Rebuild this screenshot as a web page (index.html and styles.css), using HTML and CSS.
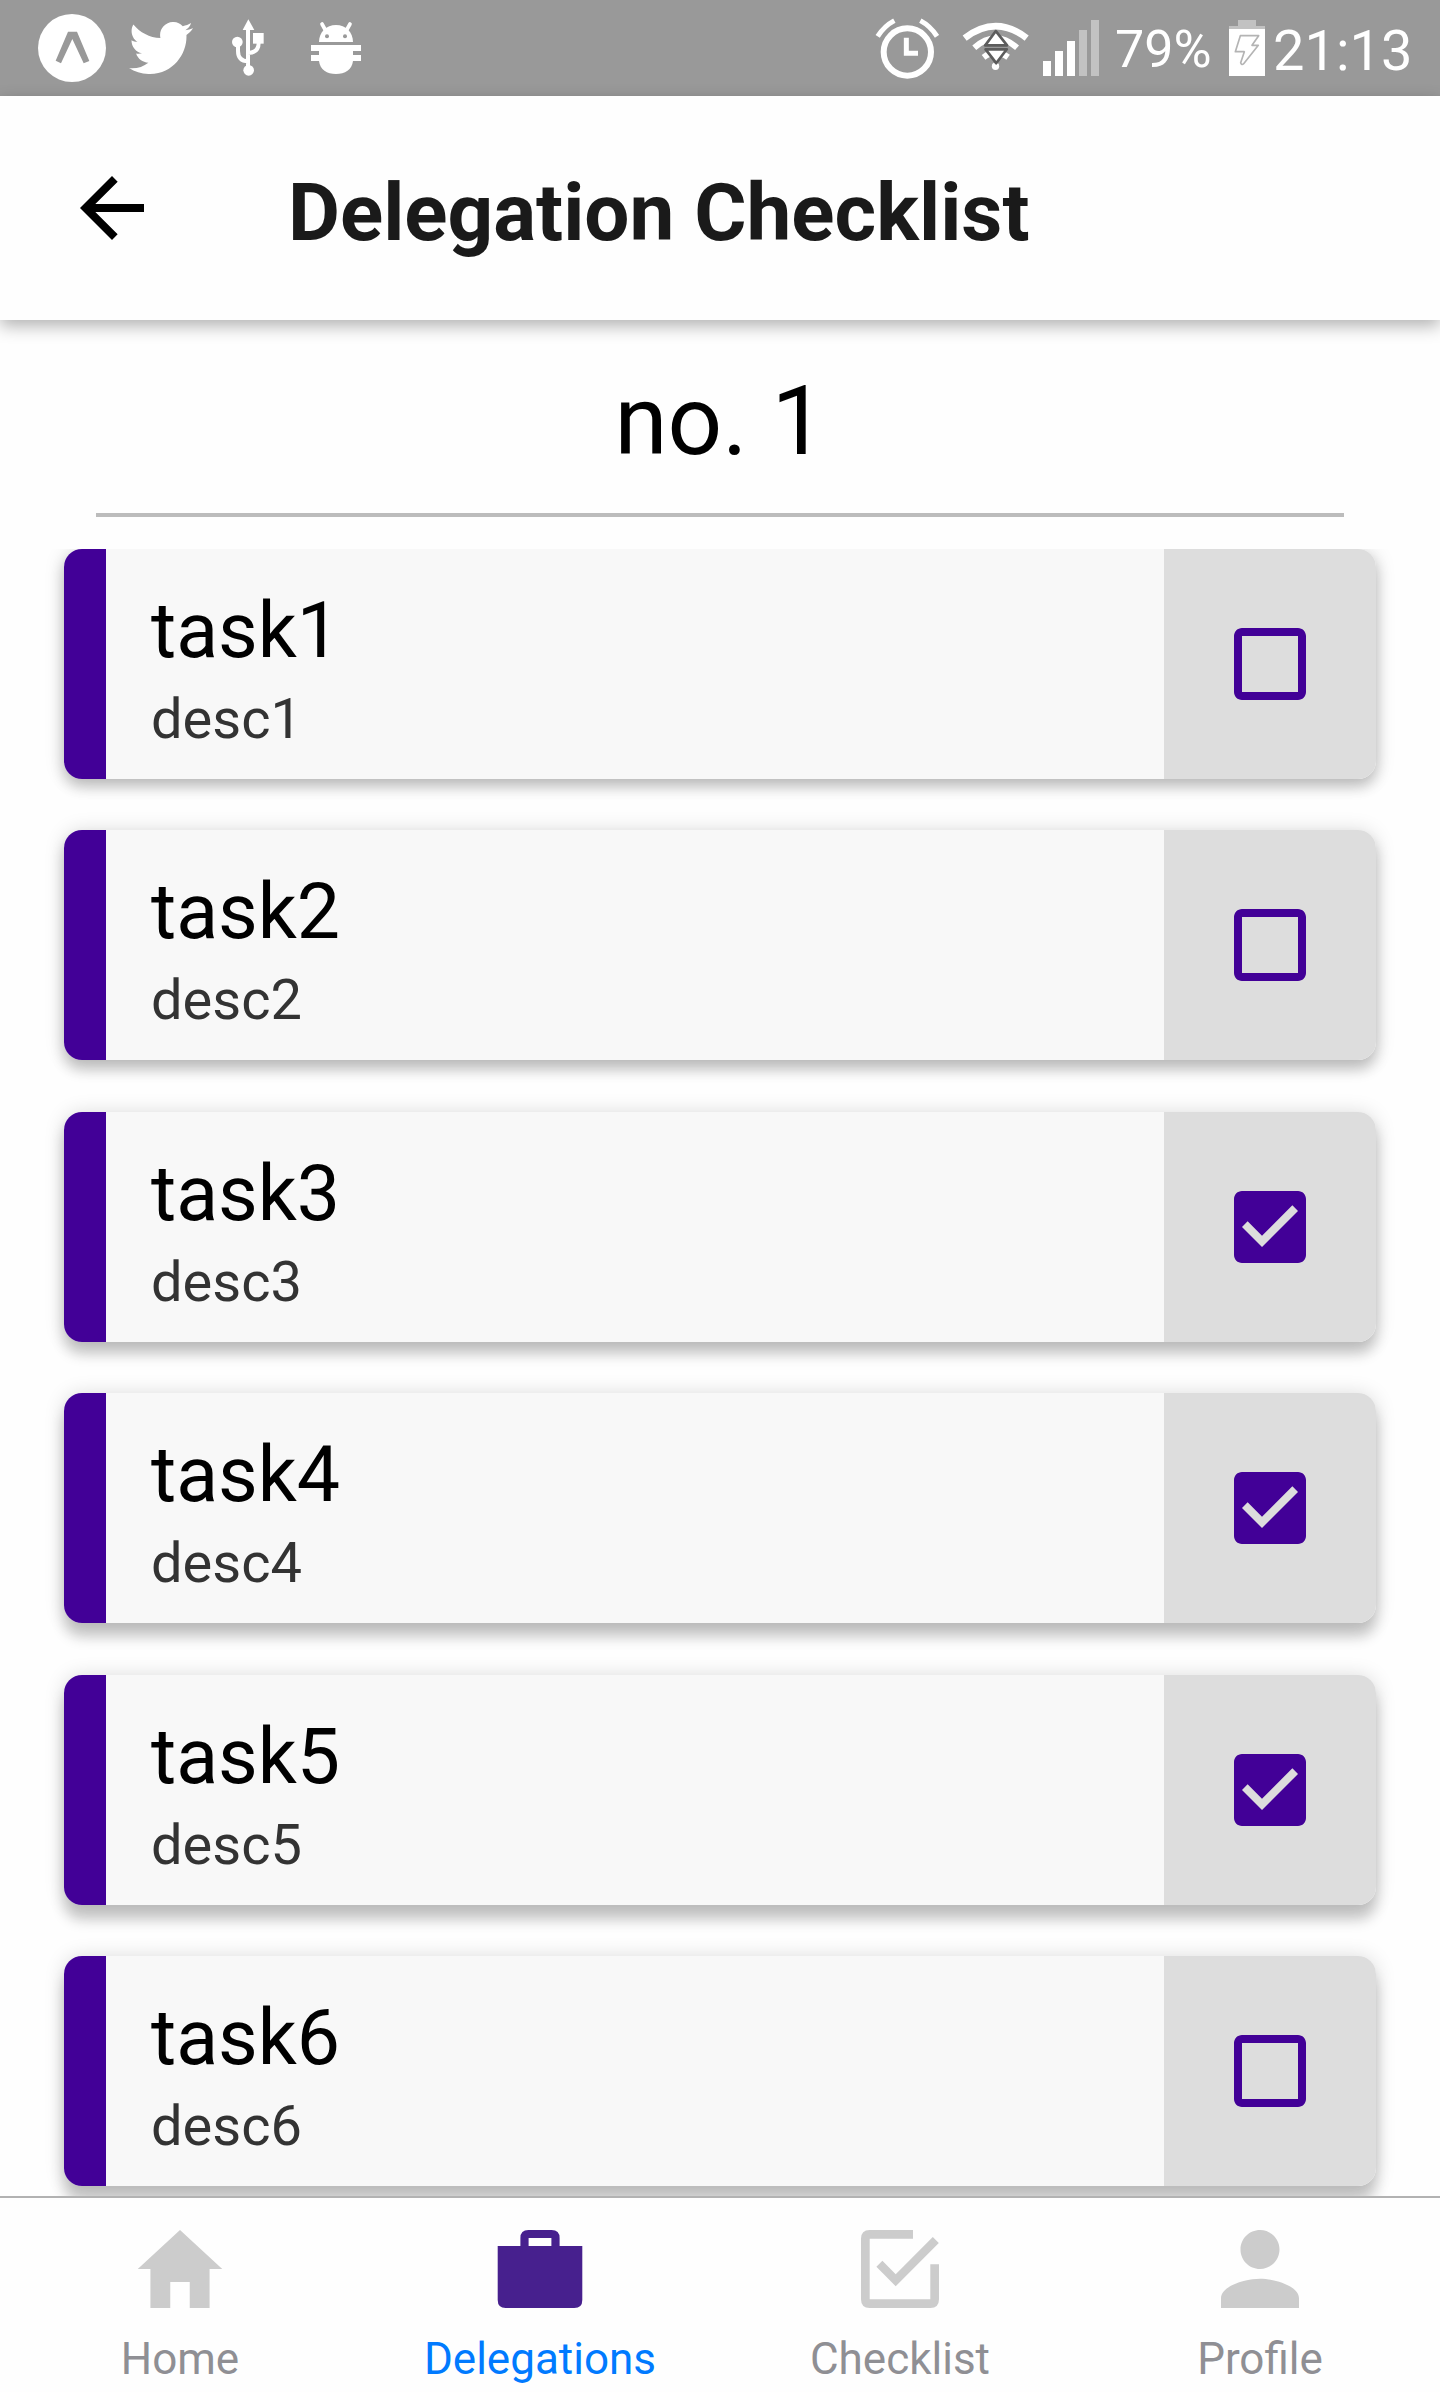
FILE: index.html
```html
<!DOCTYPE html>
<html lang="en">
<head>
<meta charset="utf-8">
<title>Delegation Checklist</title>
<link rel="stylesheet" href="styles.css">
</head>
<body>
<svg class="defs" width="0" height="0" aria-hidden="true">
  <symbol id="box-empty" viewBox="0 0 24 24"><path d="M19 5v14H5V5h14m0-2H5c-1.1 0-2 .9-2 2v14c0 1.1.9 2 2 2h14c1.1 0 2-.9 2-2V5c0-1.1-.9-2-2-2z"/></symbol>
  <symbol id="box-checked" viewBox="0 0 24 24"><path d="M19 3H5c-1.11 0-2 .9-2 2v14c0 1.1.89 2 2 2h14c1.11 0 2-.9 2-2V5c0-1.1-.89-2-2-2zm-9 14l-5-5 1.41-1.41L10 14.17l7.59-7.59L19 8l-9 9z"/></symbol>
</svg>
<div class="screen">
  <div class="status">
    <div class="status-left">
      <svg class="i-expo" viewBox="114 42 204 204"><circle cx="216" cy="144" r="102" fill="#fff"/><path d="M204 95h27l37 88-17 7-34-73-34 73-16-8z" fill="#999"/></svg>
      <svg class="i-twitter" viewBox="0 2.25 24 19.5"><path fill="#fff" d="M23.954 4.569c-.885.389-1.83.654-2.825.775 1.014-.611 1.794-1.574 2.163-2.723-.951.555-2.005.959-3.127 1.184-.896-.959-2.173-1.559-3.591-1.559-2.717 0-4.92 2.203-4.92 4.917 0 .39.045.765.127 1.124C7.691 8.094 4.066 6.13 1.64 3.161c-.427.722-.666 1.561-.666 2.475 0 1.71.87 3.213 2.188 4.096-.807-.026-1.566-.248-2.228-.616v.061c0 2.385 1.693 4.374 3.946 4.827-.413.111-.849.171-1.296.171-.314 0-.615-.03-.916-.086.631 1.953 2.445 3.377 4.604 3.417-1.68 1.319-3.809 2.105-6.102 2.105-.39 0-.779-.023-1.17-.067 2.189 1.394 4.768 2.209 7.557 2.209 9.054 0 13.999-7.496 13.999-13.986 0-.209 0-.42-.015-.63.961-.689 1.8-1.56 2.46-2.548l-.047-.02z"/></svg>
      <svg class="i-usb" viewBox="696 57 96 171"><g fill="#fff"><path d="M745 58l18 32h-35z"/><circle cx="746" cy="211" r="16"/><circle cx="712" cy="126" r="16"/><path d="M759 99h32v32h-32z"/></g><g fill="none" stroke="#fff" stroke-width="12"><path d="M744 85v120M714 135v18q0 30 30 31M776 128q0 30-32 31"/></g></svg>
      <svg class="i-bug" viewBox="933 63 150 162"><g fill="#fff"><path d="M957 126c0-30 22-51 51-51s51 21 51 51z"/><path d="M933 135h150v18h-24v12h24v18h-24c-3 26-24 39-51 39s-48-13-51-39h-24v-18h24v-12h-24z"/></g><path d="M966 72l10 18M1050 72l-10 18" stroke="#fff" stroke-width="11" stroke-linecap="round"/><circle cx="981" cy="109" r="6" fill="#999"/><circle cx="1035" cy="109" r="6" fill="#999"/></svg>
    </div>
    <div class="status-right">
      <svg class="i-alarm" viewBox="45 54 192 186"><g fill="none" stroke="#fff"><circle cx="142" cy="156" r="71" stroke-width="18"/><path d="M139 113v47h35" stroke-width="15"/><path d="M53 109q20-31 50-47M231 109q-20-31-50-47" stroke-width="15"/></g></svg>
      <svg class="i-wifi" viewBox="305 60 202 153"><g fill="none" stroke="#fff"><path d="M313 114q94-72 187 0" stroke-width="20"/><path d="M342 143q64-56 129 0" stroke-width="18"/><path d="M370 172q36-28 74 0" stroke-width="18"/></g><circle cx="406" cy="199" r="11" fill="#fff"/><path d="M407 93l-32 43h66zM376 148h64l-32 42q-5-8-32-42z" fill="#fff" stroke="#5c5c5c" stroke-width="8" stroke-linejoin="round"/></svg>
      <svg class="i-signal" viewBox="0 0 56 56"><path d="M0 41h8v15H0zM12 31h8v25h-8zM24 21h8v35h-8z" fill="#fff"/><path d="M36 10h8v46h-8zM48 0h8v56h-8z" fill="#c2c2c2"/></svg>
      <span class="percent">79%</span>
      <svg class="i-battery" viewBox="387 60 108 168"><path d="M414 60h54v18h27v9H387v-9h27z" fill="#c2c2c2"/><path d="M387 87h108v141H387z" fill="#fff"/><path d="M421 107h55l-20 29h19l-44 55q-6 6-9-3l11-33h-27z" fill="#fff" stroke="#b4b4b4" stroke-width="5" stroke-linejoin="round"/></svg>
      <span class="clock">21:13</span>
    </div>
  </div>
  <header class="header">
    <svg class="back" viewBox="0 0 24 24"><path d="M20 11H7.83l5.59-5.59L12 4l-8 8 8 8 1.41-1.41L7.83 13H20v-2z"/></svg>
    <h1>Delegation Checklist</h1>
  </header>
  <main class="content">
    <h2>no. 1</h2>
    <div class="list">
      <div class="card"><div class="text"><div class="task">task1</div><div class="desc">desc1</div></div><div class="check"><svg><use href="#box-empty"/></svg></div></div>
      <div class="card"><div class="text"><div class="task">task2</div><div class="desc">desc2</div></div><div class="check"><svg><use href="#box-empty"/></svg></div></div>
      <div class="card"><div class="text"><div class="task">task3</div><div class="desc">desc3</div></div><div class="check"><svg><use href="#box-checked"/></svg></div></div>
      <div class="card"><div class="text"><div class="task">task4</div><div class="desc">desc4</div></div><div class="check"><svg><use href="#box-checked"/></svg></div></div>
      <div class="card"><div class="text"><div class="task">task5</div><div class="desc">desc5</div></div><div class="check"><svg><use href="#box-checked"/></svg></div></div>
      <div class="card"><div class="text"><div class="task">task6</div><div class="desc">desc6</div></div><div class="check"><svg><use href="#box-empty"/></svg></div></div>
    </div>
  </main>
  <nav class="tabs">
    <div class="tab"><svg viewBox="0 0 512 512"><path d="M208 448V320h96v128h97.6V256H464L256 64 48 256h62.4v192z"/></svg><span>Home</span></div>
    <div class="tab active"><svg viewBox="0 0 104 104"><path fill-rule="evenodd" d="M9.7 29H32.400v-8q0-8 8-8h23.200q8 0 8 8v8H94.300v54q0 8-8 8H17.700q-8 0-8-8zM40.600 21v8h22.800v-8z"/></svg><span>Delegations</span></div>
    <div class="tab"><svg viewBox="0 0 104 104"><path d="M65 13v8.700H21.700V82.300H82.300v-35H91v35q0 8.700-8.700 8.700H21.700q-8.700 0-8.700-8.700V21.700q0-8.700 8.700-8.700z"/><path d="M28.400 49.700l6-6L47.700 57.300 84.800 20l6 6L47.700 69.300z"/></svg><span>Checklist</span></div>
    <div class="tab"><svg viewBox="0 0 512 512"><path d="M256 256c52.805 0 96-43.201 96-96s-43.195-96-96-96-96 43.201-96 96 43.195 96 96 96zm0 48c-63.598 0-192 32.402-192 96v48h384v-48c0-63.598-128.402-96-192-96z"/></svg><span>Profile</span></div>
  </nav>
</div>
</body>
</html>
```
FILE: styles.css
```css
* { box-sizing: border-box; }
body { margin: 0; background: #fefefe; font-family: Roboto, sans-serif; color: #000; }
.defs { display: none; }
svg { display: block; flex: none; }

.screen { display: flex; flex-direction: column; width: 1440px; height: 2392px; overflow: hidden; }

.status { flex: none; display: flex; justify-content: space-between; height: 96px; padding: 0 30px 0 38px; background: #999; color: #fff; }
.status-left, .status-right { display: flex; align-items: flex-start; }
.i-expo { width: 68px; height: 68px; margin: 14px 23px 0 0; }
.i-twitter { width: 64px; height: 52px; margin: 22px 39px 0 0; }
.i-usb { width: 32px; height: 57px; margin: 19px 47px 0 0; }
.i-bug { width: 50px; height: 54px; margin-top: 21px; }
.i-alarm { width: 64px; height: 62px; margin: 18px 23px 0 0; }
.i-wifi { width: 67px; height: 51px; margin: 20px 14px 0 0; }
.i-signal { width: 56px; height: 56px; margin: 20px 16px 0 0; }
.percent { width: 114px; font-size: 52px; line-height: 60px; padding-top: 20px; }
.i-battery { width: 36px; height: 56px; margin: 20px 8px 0 0; }
.clock { width: 137px; font-size: 56px; line-height: 62px; padding-top: 20px; white-space: nowrap; }

.header { flex: none; position: relative; z-index: 2; display: flex; align-items: center; height: 224px; padding: 0 64px; background: #fefefe; box-shadow: 0 6px 16px rgba(0, 0, 0, .3); }
.back { width: 96px; height: 96px; margin-right: 128px; }
.header h1 { margin: 0; padding-top: 9px; font-size: 80px; line-height: 94px; font-weight: 700; color: #1a1a1a; }

.content { flex: 1; min-height: 0; display: flex; flex-direction: column; }
.content h2 { flex: none; margin: 0 96px 32px; padding: 45px 0 36px; border-bottom: 4px solid #bcbcbc; font-size: 96px; line-height: 112px; font-weight: 400; text-align: center; }

.list { flex: 1; min-height: 0; display: flex; flex-direction: column; gap: 51.4px; padding: 0 64px; overflow: hidden; }
.card { --drop: 8px; flex: none; display: flex; height: 230px; border-left: 42px solid #420097; border-radius: 18px; background: linear-gradient(to left, #ddd 212px, #f8f8f8 212px); box-shadow: 0 var(--drop) 14px rgba(0, 0, 0, .2), 0 1px 20px rgba(0, 0, 0, .15); }
.card:nth-child(2) { --drop: 10px; }
.card:nth-child(3) { --drop: 12px; }
.card:nth-child(4) { --drop: 14px; }
.card:nth-child(5) { --drop: 15px; }
.card:nth-child(6) { --drop: 16px; }
.text { flex: 1; display: flex; flex-direction: column; gap: 10px; padding: 37px 0 0 45px; }
.task { font-size: 77px; line-height: 90px; }
.desc { font-size: 56px; line-height: 66px; color: #333; }
.check { width: 212px; display: flex; align-items: center; justify-content: center; }
.check svg { width: 96px; height: 96px; fill: #420097; }

.tabs { flex: none; position: relative; display: flex; height: 196px; border-top: 2px solid #b2b2b2; background: #fefefe; }
.tab { flex: 1; display: flex; flex-direction: column; align-items: center; padding-top: 19px; color: #8f8f94; }
.tab svg { width: 104px; height: 104px; fill: #ccc; }
.tab span { margin-top: 12px; font-size: 44px; line-height: 52px; }
.tab.active { color: #007aff; }
.tab.active svg { fill: #47208e; }
```
